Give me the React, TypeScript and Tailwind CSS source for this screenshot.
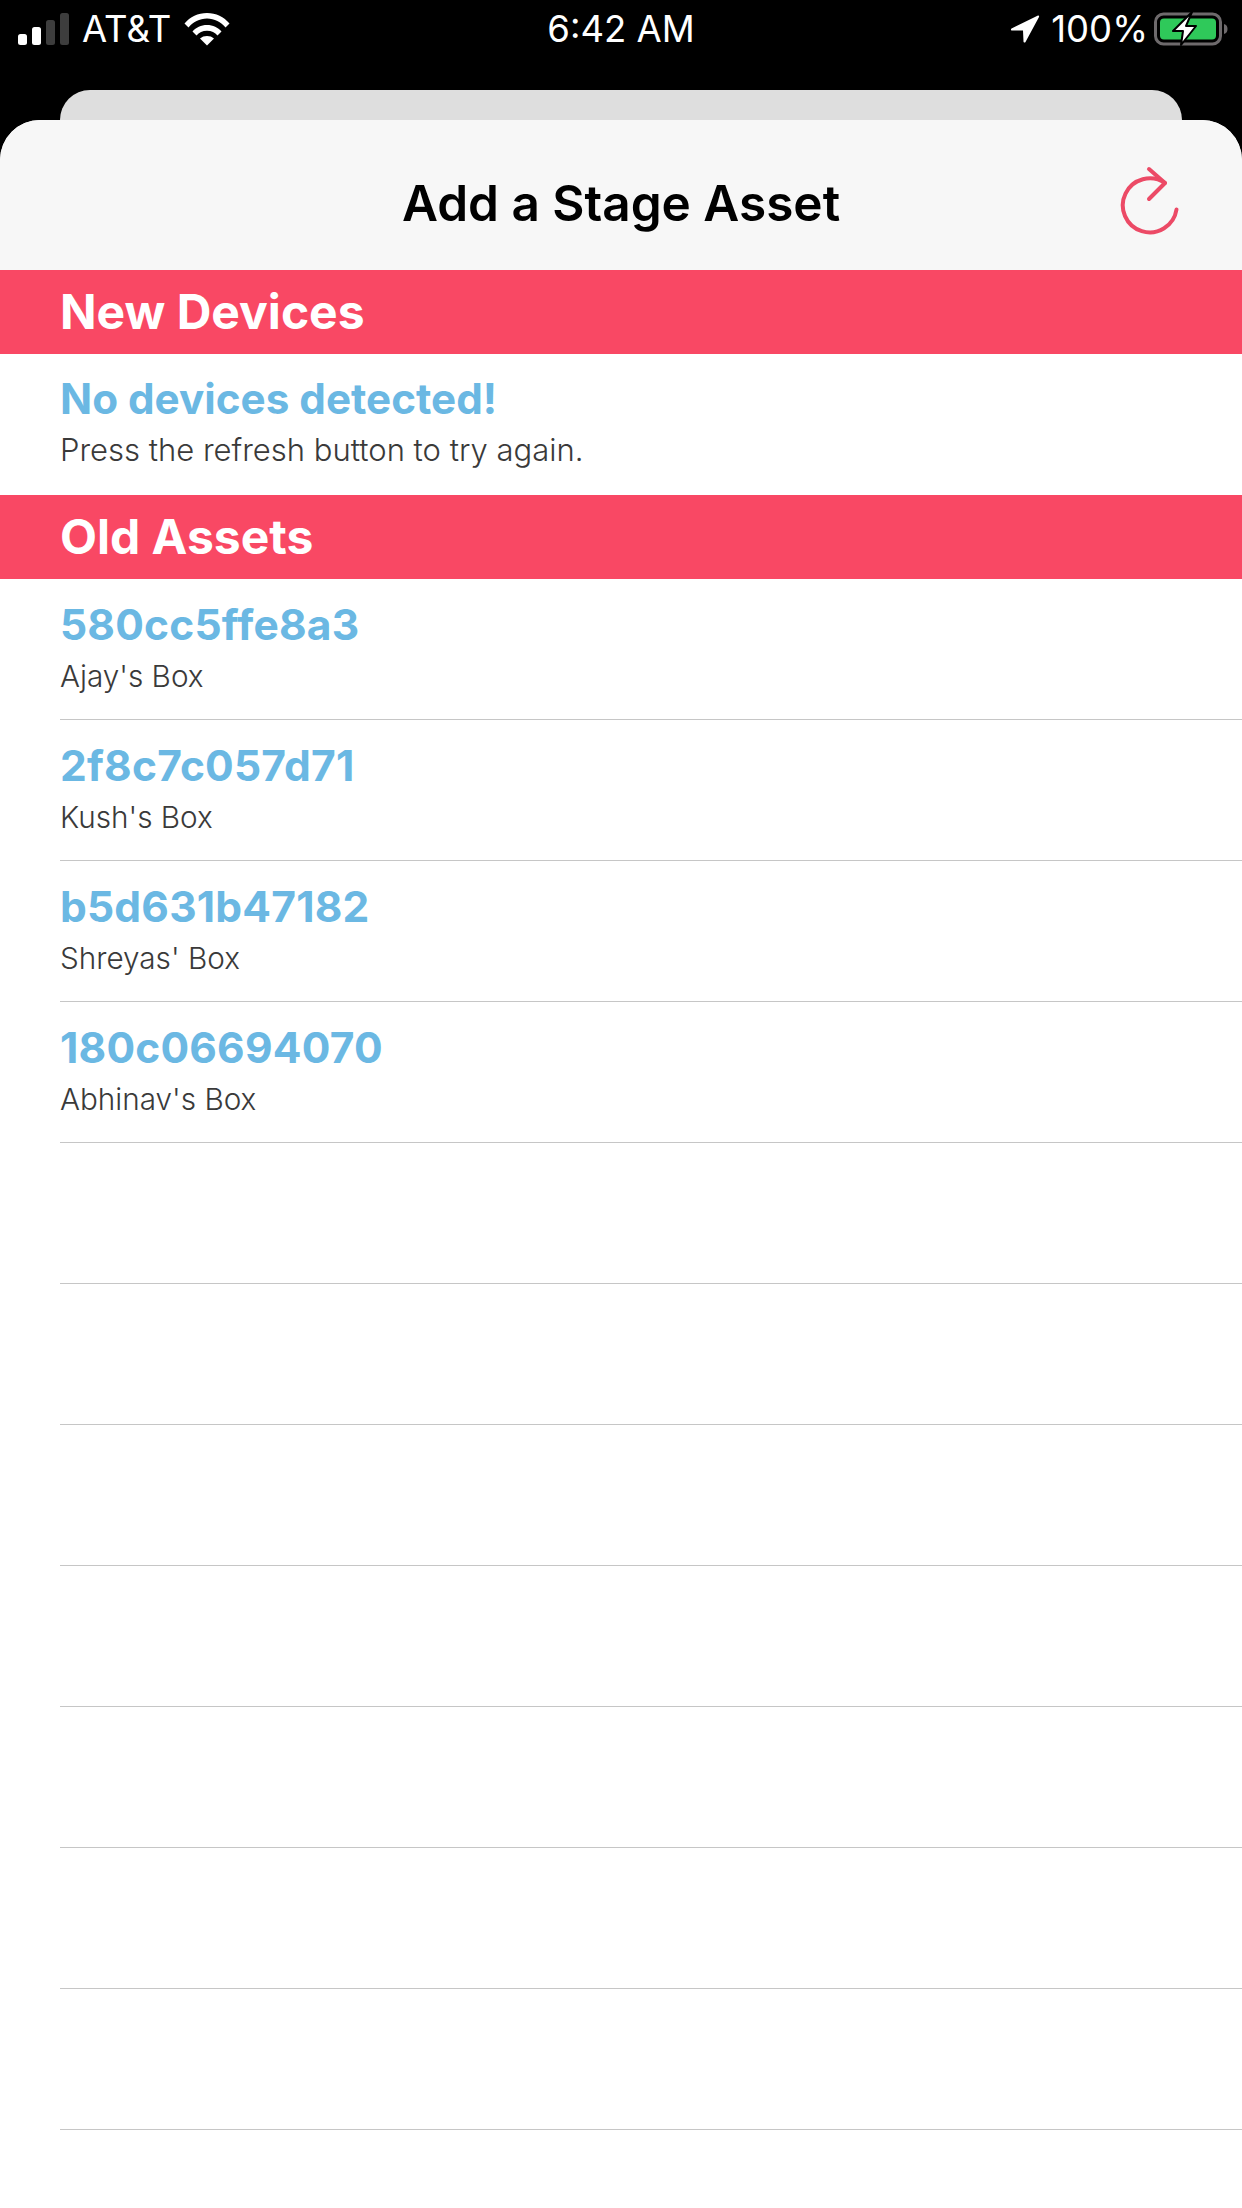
import React from "react";

const assets = [
  { id: "580cc5ffe8a3", name: "Ajay's Box" },
  { id: "2f8c7c057d71", name: "Kush's Box" },
  { id: "b5d631b47182", name: "Shreyas' Box" },
  { id: "180c06694070", name: "Abhinav's Box" },
  null,
  null,
  null,
  null,
  null,
  null,
  null,
];

function SignalIcon() {
  return (
    <svg width="52" height="32" viewBox="0 0 52 32" className="shrink-0">
      <rect x="0" y="21" width="9" height="11" rx="2.5" fill="#fff" />
      <rect x="14" y="14" width="9" height="18" rx="2.5" fill="#fff" />
      <rect x="28" y="7" width="9" height="25" rx="2.5" fill="#3d3d3d" />
      <rect x="42" y="0" width="9" height="32" rx="2.5" fill="#3d3d3d" />
    </svg>
  );
}

function WifiIcon() {
  return (
    <svg width="46" height="34" viewBox="0 0 46 34" className="shrink-0">
      <path d="M0.5 11.5C6 5 14 1 23 1s17 4 22.500 10.500L41.500 15.500C37 10 30.500 6.500 23 6.500S9 10 4.500 15.500Z" fill="#fff" />
      <path d="M8.500 19.500C12 15.500 17 13 23 13s11 2.500 14.500 6.500L33.500 23.500C31 20.500 27.500 18.800 23 18.800S15 20.500 12.500 23.500Z" fill="#fff" />
      <path d="M16 26.500C18 24.800 20.300 24 23 24s5 .8 7 2.500L23 33.500Z" fill="#fff" />
    </svg>
  );
}

function LocationIcon() {
  return (
    <svg width="30" height="30" viewBox="0 0 30 30" className="shrink-0">
      <path d="M28 1.500 1.500 14.500c-1 .6-.6 2 .5 2L13 16.500l.5 11c0 1.200 1.500 1.500 2 .5L29 3c.4-1-.2-1.800-1-1.500Z" fill="#fff" />
    </svg>
  );
}

function BatteryIcon() {
  return (
    <svg width="74" height="36" viewBox="0 0 74 36" className="shrink-0">
      <rect x="1.500" y="3" width="65" height="30" rx="8" fill="none" stroke="#6e6a6c" strokeWidth="3" />
      <rect x="6" y="7.500" width="56" height="21" rx="4" fill="#2fc95a" />
      <path d="M70 13c2.500.5 3.500 2.500 3.500 5s-1 4.500-3.500 5Z" fill="#6e6a6c" />
      <path d="M38 1 19 20h10l-2 14 15-19H32Z" fill="#fff" stroke="#000" strokeWidth="2" strokeLinejoin="round" />
    </svg>
  );
}

function RefreshIcon() {
  return (
    <svg width="70" height="80" viewBox="0 0 70 80" fill="none" stroke="#ec4a66" strokeWidth="4" strokeLinecap="round" strokeLinejoin="round">
      <path d="M59.500 46.500A27 27 0 1 1 48 20" />
      <path d="M32 6 48 20 32 36" />
    </svg>
  );
}

function SectionHeader({ title }: { title: string }) {
  return (
    <div className="h-[84px] bg-[#f94864] pl-[60px] flex items-center">
      <h2 className="text-[48px] leading-none font-bold text-white">{title}</h2>
    </div>
  );
}

export default function App() {
  return (
    <div className="w-[1242px] h-[2208px] bg-black overflow-hidden font-['Inter',sans-serif]">
      <div className="h-[90px] pt-[10px] relative flex items-start text-white">
        <div className="flex items-center h-[38px] pl-[18px]">
          <SignalIcon />
          <span className="ml-[12px] text-[36.5px] leading-none">AT&amp;T</span>
          <span className="ml-[13px]">
            <WifiIcon />
          </span>
        </div>
        <span className="absolute left-0 right-0 top-[10px] h-[38px] flex items-center justify-center text-[36.5px] leading-none">
          6:42 AM
        </span>
        <div className="ml-auto flex items-center h-[38px] pr-[14px]">
          <LocationIcon />
          <span className="ml-[11px] text-[36.5px] leading-none">100%</span>
          <span className="ml-[6px]">
            <BatteryIcon />
          </span>
        </div>
      </div>

      <div className="mx-[60px] h-[30px] bg-[#dedede] rounded-t-[30px]" />

      <div className="h-[2088px] bg-white rounded-t-[40px] overflow-hidden">
        <header className="h-[150px] pt-[17px] bg-[#f7f7f7] flex items-center">
          <div className="flex-1" />
          <h1 className="text-[49.5px] leading-none font-semibold text-black">Add a Stage Asset</h1>
          <div className="flex-1 flex justify-end">
            <div className="mr-[55px] flex -mt-[2px]">
              <RefreshIcon />
            </div>
          </div>
        </header>

        <SectionHeader title="New Devices" />
        <div className="h-[141px] pl-[60px] pt-[20px]">
          <div className="text-[42.2px] leading-[50px] font-bold text-[#6bb8e3]">No devices detected!</div>
          <div className="mt-[6px] text-[31px] leading-[40px] font-light text-[#3a3a3a]">Press the refresh button to try again.</div>
        </div>

        <SectionHeader title="Old Assets" />
        <div className="pl-[60px]">
          {assets.map((asset, i) => (
            <div key={i} className="h-[141px] border-b border-[#c6c6c6] pt-[21px]">
              {asset && (
                <>
                  <div className="text-[42.5px] leading-[50px] font-bold tracking-[0.2px] text-[#6bb8e3]">{asset.id}</div>
                  <div className="mt-[6px] text-[29.7px] leading-[40px] font-light text-[#3a3a3a]">{asset.name}</div>
                </>
              )}
            </div>
          ))}
        </div>
      </div>
    </div>
  );
}
